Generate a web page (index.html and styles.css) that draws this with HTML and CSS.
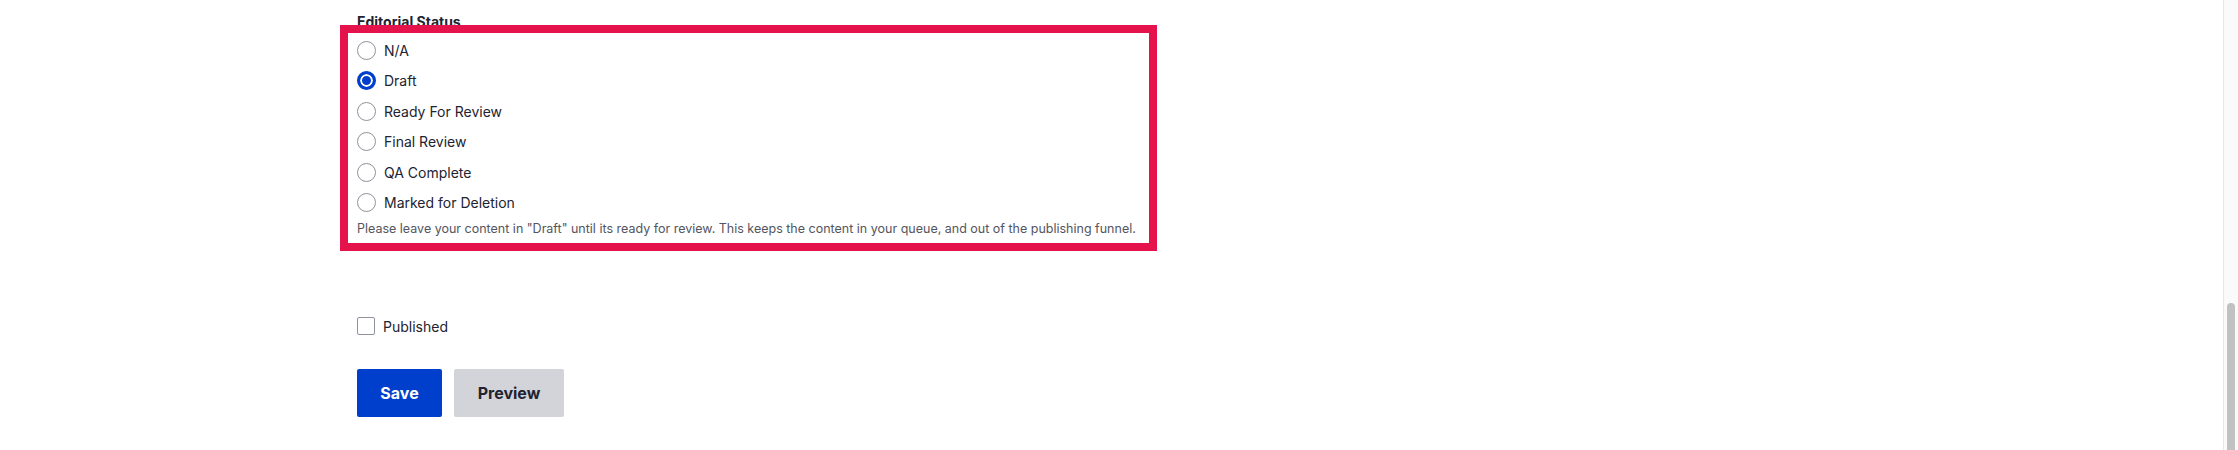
FILE: index.html
```html
<!DOCTYPE html>
<html lang="en">
<head>
<meta charset="utf-8">
<title>Editorial Status</title>
<link rel="stylesheet" href="styles.css">
</head>
<body>
<div class="page">
  <main class="content">
    <div class="status" role="radiogroup" aria-labelledby="status-label">
      <div class="status-label" id="status-label">Editorial Status</div>
      <div class="options">
        <label class="option"><span class="radio"></span><span>N/A</span></label>
        <label class="option"><span class="radio checked"></span><span>Draft</span></label>
        <label class="option"><span class="radio"></span><span>Ready For Review</span></label>
        <label class="option"><span class="radio"></span><span>Final Review</span></label>
        <label class="option"><span class="radio"></span><span>QA Complete</span></label>
        <label class="option"><span class="radio"></span><span>Marked for Deletion</span></label>
      </div>
      <p class="description">Please leave your content in "Draft" until its ready for review. This keeps the content in your queue, and out of the publishing funnel.</p>
      <div class="highlight"></div>
    </div>

    <label class="published"><span class="checkbox"></span><span>Published</span></label>

    <div class="actions">
      <button class="btn btn-primary">Save</button>
      <button class="btn btn-secondary">Preview</button>
    </div>
  </main>
  <div class="scrollbar"><div class="thumb"></div></div>
</div>
</body>
</html>
```

FILE: styles.css
```css
html, body {
  margin: 0;
  padding: 0;
  background: #ffffff;
}

body {
  font-family: Inter, "Liberation Sans", Arial, sans-serif;
  color: #222330;
  height: 450px;
  overflow: hidden;
}

.page {
  display: flex;
  height: 450px;
}

.content {
  flex: 1;
  padding: 12px 0 0 357px;
}

.status {
  position: relative;
  width: 790px;
}

.status-label {
  font-size: 14px;
  font-weight: 700;
  line-height: 20px;
  color: #222330;
}

.options {
  display: flex;
  flex-direction: column;
  padding-top: 3px;
}

.option {
  display: flex;
  align-items: center;
  gap: 8px;
  height: 30.5px;
  font-size: 14px;
  color: #222330;
}

.radio {
  box-sizing: border-box;
  width: 19px;
  height: 19px;
  border: 1px solid #8e929c;
  border-radius: 50%;
  background: #fff;
  flex: none;
}

.radio.checked {
  border: 3px solid #003ecc;
  box-shadow: inset 0 0 0 2px #fff;
  background: #003ecc;
}

.description {
  margin: 2px 0 0;
  font-size: 12.5px;
  line-height: 18px;
  color: #545560;
  white-space: nowrap;
}

.highlight {
  position: absolute;
  left: -17px;
  top: 13px;
  width: 817px;
  height: 226px;
  box-sizing: border-box;
  border: 8px solid #e5134b;
  pointer-events: none;
}

.published {
  display: flex;
  align-items: center;
  gap: 8px;
  margin-top: 78px;
  height: 20px;
  font-size: 14px;
  color: #222330;
}

.checkbox {
  box-sizing: border-box;
  width: 18px;
  height: 18px;
  border: 1px solid #8e929c;
  border-radius: 2px;
  background: #fff;
  flex: none;
}

.actions {
  display: flex;
  gap: 12px;
  margin-top: 33px;
}

.btn {
  height: 48px;
  border: 0;
  border-radius: 2px;
  font-family: Inter, "Liberation Sans", Arial, sans-serif;
  font-size: 16px;
  font-weight: 700;
  padding: 0;
}

.btn-primary {
  width: 85px;
  background: #003ecc;
  color: #ffffff;
}

.btn-secondary {
  width: 110px;
  background: #d3d4d9;
  color: #222330;
}

.scrollbar {
  width: 14px;
  flex: none;
  background: #fafafa;
  border-left: 1px solid #e8e8e8;
  display: flex;
  flex-direction: column;
  justify-content: flex-end;
  align-items: center;
}

.thumb {
  width: 8px;
  height: 147px;
  background: #c1c1c1;
  border-radius: 4px 4px 0 0;
}
```
